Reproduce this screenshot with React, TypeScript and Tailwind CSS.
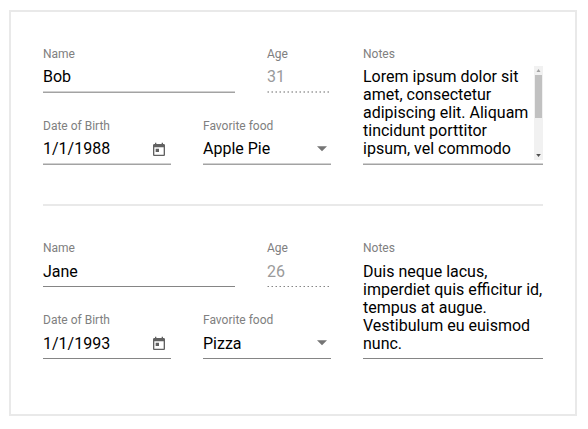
import type { ReactNode } from "react";

type Person = {
  name: string;
  age: number;
  born: string;
  food: string;
  notes: string[];
  overflow: boolean;
};

const people: Person[] = [
  {
    name: "Bob",
    age: 31,
    born: "1/1/1988",
    food: "Apple Pie",
    notes: ["Lorem ipsum dolor sit", "amet, consectetur", "adipiscing elit. Aliquam", "tincidunt porttitor", "ipsum, vel commodo"],
    overflow: true,
  },
  {
    name: "Jane",
    age: 26,
    born: "1/1/1993",
    food: "Pizza",
    notes: ["Duis neque lacus,", "imperdiet quis efficitur id,", "tempus at augue.", "Vestibulum eu euismod", "nunc."],
    overflow: false,
  },
];

function Underline({ soft, dotted }: { soft: boolean; dotted?: boolean }) {
  if (dotted) {
    const dots = soft
      ? "bg-[repeating-linear-gradient(to_right,#d8d8d8_0_1px,#b4b4b4_1px_2px,transparent_2px_4px)]"
      : "bg-[repeating-linear-gradient(to_right,#c4c4c4_0_1px,#858585_1px_2px,transparent_2px_4px)]";
    return (
      <div className="flex h-[2px] flex-col justify-end">
        <div className={`${soft ? "h-[2px]" : "h-px"} ${dots}`} />
      </div>
    );
  }
  return (
    <div className="h-[2px]">
      <div className={`h-px ${soft ? "bg-[#d1d1d1]" : "bg-white"}`} />
      <div className={`h-px ${soft ? "bg-[#a3a3a3]" : "bg-[#858585]"}`} />
    </div>
  );
}

function Field({ label, soft, dotted, className, children }: { label: string; soft: boolean; dotted?: boolean; className: string; children: ReactNode }) {
  return (
    <div className={className}>
      <div className="h-[14px] text-[12px] leading-[14px] text-[#808080]">{label}</div>
      <div className="pt-[5px]">{children}</div>
      <Underline soft={soft} dotted={dotted} />
    </div>
  );
}

function CalendarIcon() {
  return (
    <svg className="mt-1 mr-1 h-4 w-4" viewBox="0 0 24 24" fill="#616161">
      <path d="M19 3h-1V1h-2v2H8V1H6v2H5c-1.11 0-1.99.9-1.99 2L3 19c0 1.1.89 2 2 2h14c1.1 0 2-.9 2-2V5c0-1.1-.9-2-2-2zm0 16H5V8h14v11zM7 10h5v5H7z" />
    </svg>
  );
}

function ScrollBar() {
  return (
    <div className="flex h-[94px] w-[9px] flex-col items-center bg-[#f1f1f1]">
      <svg className="h-[9px] w-[9px] shrink-0" viewBox="0 0 9 9" fill="#a3a3a3">
        <path d="M2.5 6L4.5 3L6.5 6Z" />
      </svg>
      <div className="h-[43px] w-[7px] bg-[#c1c1c1]" />
      <svg className="mt-auto h-[9px] w-[9px] shrink-0" viewBox="0 0 9 9" fill="#505050">
        <path d="M2.2 3L6.8 3L4.5 6Z" />
      </svg>
    </div>
  );
}

function Record({ person, soft }: { person: Person; soft: boolean }) {
  const inset = soft ? "pt-[2px]" : "pt-[3px]";
  return (
    <div className="flex gap-8">
      <div className="flex w-72 flex-col gap-[26px]">
        <div className="flex gap-8">
          <Field label="Name" soft={soft} className="w-48">
            <div className={`h-[25px] ${inset}`}>{person.name}</div>
          </Field>
          <Field label="Age" soft={soft} dotted className="w-16">
            <div className={`h-[25px] text-[#9a9a9a] ${inset}`}>{person.age}</div>
          </Field>
        </div>
        <div className="flex gap-8">
          <Field label="Date of Birth" soft={soft} className="w-32">
            <div className="flex h-[25px] justify-between">
              <span className={inset}>{person.born}</span>
              <CalendarIcon />
            </div>
          </Field>
          <Field label="Favorite food" soft={soft} className="w-32">
            <div className="flex h-[25px] justify-between">
              <span className={inset}>{person.food}</span>
              <svg className="mt-[8px] mr-[4px] h-[6px] w-[10px]" viewBox="0 0 10 6" fill="#757575">
                <path d="M0 0.3H10L5 5.3Z" />
              </svg>
            </div>
          </Field>
        </div>
      </div>
      <Field label="Notes" soft={soft} className="w-[180px]">
        <div className="flex h-[97px] justify-between">
          <div className={inset}>
            {person.notes.map((line) => (
              <div key={line} className="whitespace-nowrap">{line}</div>
            ))}
          </div>
          {person.overflow && <ScrollBar />}
        </div>
      </Field>
    </div>
  );
}

export default function App() {
  return (
    <div className="h-[429px] w-[588px] bg-white pt-[10px] pl-[9px] font-['Roboto',sans-serif] text-[16px] leading-[18px] text-black">
      <main className="h-[406px] w-[568px] border-2 border-[#e9e9e9] px-8 pt-[35px]">
        <Record person={people[0]} soft />
        <div className="mt-[39px] mb-[35px] h-[2px] bg-[#e9e9e9]" />
        <Record person={people[1]} soft={false} />
      </main>
    </div>
  );
}
